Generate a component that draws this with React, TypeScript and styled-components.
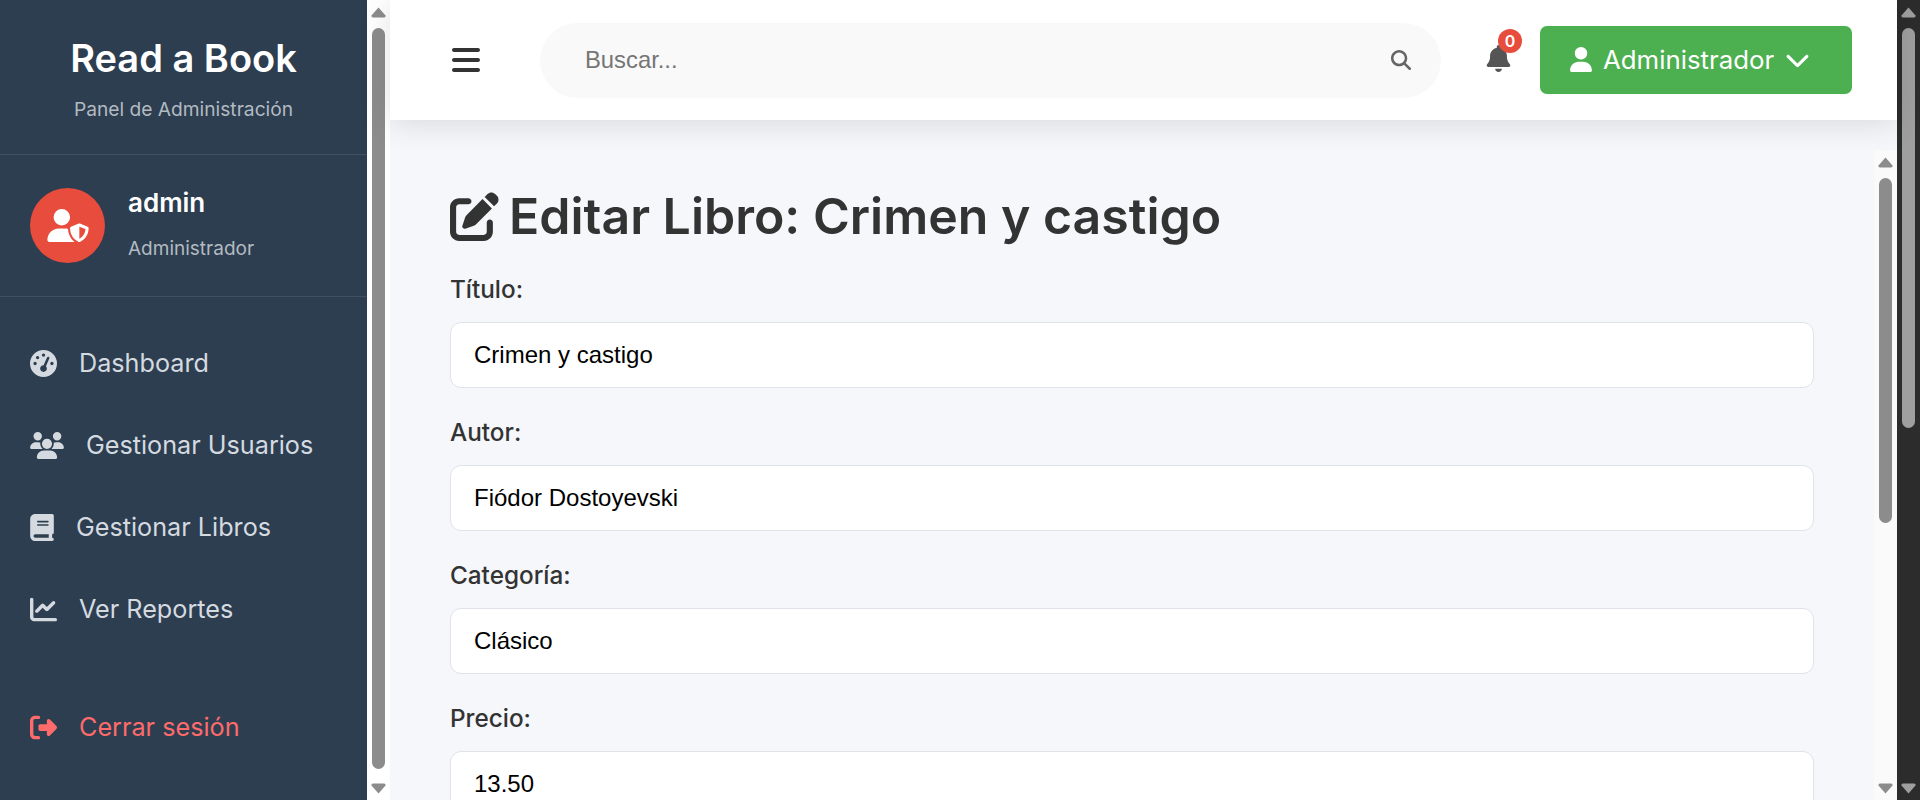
import React from 'react'
import styled, { createGlobalStyle } from 'styled-components'
import {
  FaBars, FaBell, FaBook, FaChartLine, FaChevronDown, FaGaugeHigh, FaMagnifyingGlass,
  FaPenToSquare, FaRightFromBracket, FaUser, FaUserShield, FaUsers,
} from 'react-icons/fa6'

const display = `Inter, "Open Sans", "Liberation Sans", sans-serif`
const plain = `"Liberation Sans", Arial, sans-serif`

const GlobalStyle = createGlobalStyle`
  html, body {
    margin: 0;
    height: 100%;
    overflow: hidden;
    font-family: ${display};
  }
  * { box-sizing: border-box; }
`

const Shell = styled.div`
  display: flex;
  width: 100vw;
  height: 100vh;
  overflow: hidden;
`

const Sidebar = styled.aside`
  flex: 0 0 367px;
  display: flex;
  flex-direction: column;
  background: #2c3e50;
  color: #fff;
`

const Brand = styled.div`
  flex: 0 0 155px;
  padding-top: 35px;
  text-align: center;
  border-bottom: 1px solid rgba(255, 255, 255, 0.1);
`

const BrandTitle = styled.h1`
  margin: 0;
  font-size: 38px;
  line-height: 46px;
  font-weight: 600;
`

const BrandSub = styled.p`
  margin: 16px 0 0;
  font-size: 19.2px;
  line-height: 24px;
  color: #b3bac1;
`

const UserPanel = styled.div`
  flex: 0 0 142px;
  display: flex;
  align-items: center;
  gap: 23px;
  padding: 0 30px;
  border-bottom: 1px solid rgba(255, 255, 255, 0.1);
`

const Avatar = styled.div`
  flex: 0 0 75px;
  height: 75px;
  border-radius: 50%;
  background: #e74c3c;
  display: flex;
  align-items: center;
  justify-content: center;
  svg { width: 42px; height: 33px; }
`

const UserInfo = styled.div`
  padding-top: 2px;
`

const UserName = styled.div`
  margin-top: -4px;
  font-size: 26px;
  line-height: 30px;
  font-weight: 600;
`

const UserRole = styled.div`
  margin-top: 19px;
  font-size: 19px;
  line-height: 24px;
  color: #b3bac1;
`

const Nav = styled.nav`
  display: flex;
  flex-direction: column;
  padding-top: 25px;
`

const NavItem = styled.a<{ $danger?: boolean; $icon: number }>`
  height: 82px;
  padding-left: 30px;
  display: flex;
  align-items: center;
  gap: 22px;
  font-size: 25.2px;
  color: ${p => (p.$danger ? '#ff6b6b' : '#d5dae0')};
  svg { width: ${p => p.$icon}px; height: 27px; flex: none; }
`

const LogoutGap = styled.div`
  height: 36px;
`

const Scroll = styled.div<{ $dark?: boolean; $bg: string }>`
  flex: 0 0 23px;
  display: flex;
  flex-direction: column;
  align-items: center;
  background: ${p => p.$bg};
  padding: 7px 0 6px;
  color: ${p => (p.$dark ? '#9f9f9f' : '#8c8c8c')};
`

const Thumb = styled.div<{ $dark?: boolean; $size: number }>`
  width: 13px;
  height: ${p => p.$size}px;
  margin-top: 10px;
  border-radius: 7px;
  background: ${p => (p.$dark ? '#9f9f9f' : '#8c8c8c')};
`

const ScrollSpacer = styled.div`
  flex: 1;
`

const Main = styled.div`
  flex: 1;
  min-width: 0;
  display: flex;
  flex-direction: column;
`

const Topbar = styled.header`
  flex: 0 0 120px;
  position: relative;
  z-index: 2;
  display: flex;
  align-items: center;
  padding: 0 45px 0 60px;
  background: #fff;
  box-shadow: 0 4px 30px rgba(0, 0, 0, 0.12);
`

const MenuButton = styled.div`
  flex: 0 0 90px;
  display: flex;
  align-items: center;
  color: #333;
  font-size: 32px;
`

const SearchBox = styled.div`
  flex: 0 0 901px;
  height: 75px;
  display: flex;
  align-items: center;
  justify-content: space-between;
  padding: 0 30px 0 45px;
  border-radius: 38px;
  background: #f9f9f9;
  font-family: ${plain};
  font-size: 23.8px;
  color: #757575;
  svg { color: #666; font-size: 20px; }
`

const BellWrap = styled.div`
  position: relative;
  margin: -4px 0 0 44px;
  display: flex;
  color: #555;
  font-size: 27px;
`

const Badge = styled.span`
  position: absolute;
  top: -16px;
  right: -10px;
  width: 24px;
  height: 24px;
  border-radius: 50%;
  background: #e74c3c;
  color: #fff;
  display: flex;
  align-items: center;
  justify-content: center;
  font-size: 16px;
  font-weight: 600;
`

const AdminButton = styled.div`
  margin-left: auto;
  width: 312px;
  height: 68px;
  padding: 0 0 2px 30px;
  border-radius: 7px;
  background: #4caf50;
  color: #fff;
  display: flex;
  align-items: center;
  font-size: 25.8px;
`

const AdminIcon = styled(FaUser)`
  width: 22px;
  height: 25px;
  margin-right: 11px;
`

const AdminCaret = styled(FaChevronDown)`
  width: 25px;
  height: 25px;
  margin-left: 11px;
`

const Body = styled.div`
  flex: 1;
  min-height: 0;
  display: flex;
  padding-top: 30px;
  background: #f5f7fb;
`

const Form = styled.form`
  flex: 1;
  min-width: 0;
  padding: 30px 60px 0 60px;
  overflow: hidden;
`

const PageTitle = styled.h2`
  margin: 0 0 19px;
  display: flex;
  align-items: center;
  gap: 10px;
  font-size: 50px;
  line-height: 72px;
  font-weight: 600;
  color: #333;
  svg { font-size: 49px; flex: none; }
`

const Field = styled.div`
  margin-bottom: 26px;
`

const Label = styled.label`
  display: block;
  height: 36px;
  margin-bottom: 15px;
  font-size: 24.3px;
  line-height: 36px;
  font-weight: 500;
  color: #333;
`

const TextInput = styled.input`
  display: block;
  width: 100%;
  height: 66px;
  padding: 0 23px;
  border: 1.5px solid #e0e3ea;
  border-radius: 11px;
  background: #fff;
  font-family: ${plain};
  font-size: 24px;
  color: #000;
  outline: none;
`

const fields = [
  { label: 'Título:', value: 'Crimen y castigo' },
  { label: 'Autor:', value: 'Fiódor Dostoyevski' },
  { label: 'Categoría:', value: 'Clásico' },
  { label: 'Precio:', value: '13.50' },
]

const ScrollBar: React.FC<{ dark?: boolean; bg: string; size: number }> = ({ dark, bg, size }) => (
  <Scroll $dark={dark} $bg={bg}>
    <svg width="15" height="11" viewBox="0 0 15 11"><path d="M7.5 0.5 L14.5 8.5 Q15 10.5 13 10.5 L2 10.5 Q0 10.5 0.5 8.5 Z" fill="currentColor" /></svg>
    <Thumb $dark={dark} $size={size} />
    <ScrollSpacer />
    <svg width="15" height="11" viewBox="0 0 15 11"><path d="M7.5 10.5 L14.5 2.5 Q15 0.5 13 0.5 L2 0.5 Q0 0.5 0.5 2.5 Z" fill="currentColor" /></svg>
  </Scroll>
)

const App: React.FC = () => (
  <Shell>
    <GlobalStyle />
    <Sidebar>
      <Brand>
        <BrandTitle>Read a Book</BrandTitle>
        <BrandSub>Panel de Administración</BrandSub>
      </Brand>
      <UserPanel>
        <Avatar><FaUserShield /></Avatar>
        <UserInfo>
          <UserName>admin</UserName>
          <UserRole>Administrador</UserRole>
        </UserInfo>
      </UserPanel>
      <Nav>
        <NavItem $icon={27}><FaGaugeHigh />Dashboard</NavItem>
        <NavItem $icon={34}><FaUsers />Gestionar Usuarios</NavItem>
        <NavItem $icon={24}><FaBook />Gestionar Libros</NavItem>
        <NavItem $icon={27}><FaChartLine />Ver Reportes</NavItem>
        <LogoutGap />
        <NavItem $danger $icon={27}><FaRightFromBracket />Cerrar sesión</NavItem>
      </Nav>
    </Sidebar>
    <ScrollBar bg="#fff" size={741} />
    <Main>
      <Topbar>
        <MenuButton><FaBars /></MenuButton>
        <SearchBox>Buscar...<FaMagnifyingGlass /></SearchBox>
        <BellWrap><FaBell /><Badge>0</Badge></BellWrap>
        <AdminButton><AdminIcon />Administrador<AdminCaret /></AdminButton>
      </Topbar>
      <Body>
        <Form>
          <PageTitle><FaPenToSquare />Editar Libro: Crimen y castigo</PageTitle>
          {fields.map(f => (
            <Field key={f.label}>
              <Label>{f.label}</Label>
              <TextInput defaultValue={f.value} />
            </Field>
          ))}
        </Form>
        <ScrollBar bg="#fafafa" size={345} />
      </Body>
    </Main>
    <ScrollBar dark bg="#2c2c2c" size={400} />
  </Shell>
)

export default App
